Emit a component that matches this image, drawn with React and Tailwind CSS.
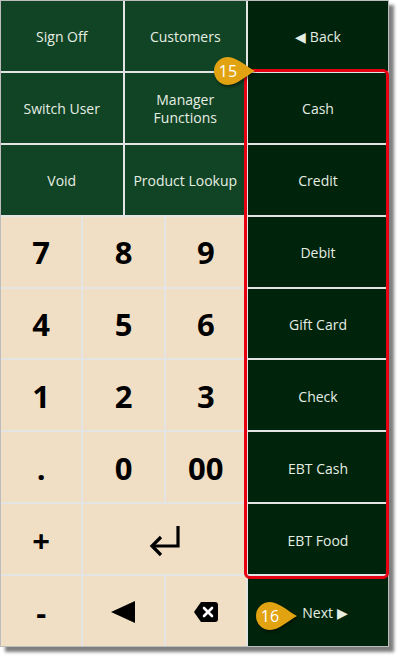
import React from "react";

const font = { fontFamily: '"Open Sans", "Liberation Sans", sans-serif' };

function Badge({ label, className }) {
  return (
    <div className={`absolute w-[46px] h-[32px] ${className}`}>
      <svg width="46" height="32" viewBox="0 0 46 32" className="absolute left-0 top-0 drop-shadow-[1px_2px_1.5px_rgba(0,0,0,0.45)]">
        <path d="M15 2 A14 14 0 1 0 15 30 C24 30 34 20 42 16 C34 12 24 2 15 2 Z" fill="#e1a312" />
      </svg>
      <span className="absolute left-0 top-0 w-[30px] h-[32px] flex items-center justify-center text-white text-[16px]">
        {label}
      </span>
    </div>
  );
}

function TopBtn({ children }) {
  return (
    <div className="col-span-3 bg-[#114425] text-[#e6eee4] text-[14px] leading-[18px] pt-[2px] flex items-center justify-center text-center">
      {children}
    </div>
  );
}

function Key({ children, span = "col-span-2" }) {
  return (
    <div className={`${span} bg-[#f0dfc5] text-black font-bold text-[31px] pt-[2px] flex items-center justify-center`}>
      {children}
    </div>
  );
}

function PayBtn({ children }) {
  return (
    <div className="flex-1 bg-[#00230b] text-[#e6eee4] text-[14px] pt-[2px] flex items-center justify-center">
      {children}
    </div>
  );
}

export default function App() {
  const payments = ["Cash", "Credit", "Debit", "Gift Card", "Check", "EBT Cash", "EBT Food"];
  return (
    <div className="w-[400px] h-[658px] bg-white relative" style={font}>
      <div className="w-[389px] h-[647px] border border-[#bdbdbd] bg-[#e4e4e4] flex gap-[2px] shadow-[5px_5px_3px_rgba(0,0,0,0.5)]">
        <div className="w-[245px] grid grid-cols-6 grid-rows-9 gap-[2px]">
          <TopBtn>Sign Off</TopBtn>
          <TopBtn>Customers</TopBtn>
          <TopBtn>Switch User</TopBtn>
          <TopBtn>
            Manager
            <br />
            Functions
          </TopBtn>
          <TopBtn>Void</TopBtn>
          <TopBtn>Product Lookup</TopBtn>
          <Key>7</Key>
          <Key>8</Key>
          <Key>9</Key>
          <Key>4</Key>
          <Key>5</Key>
          <Key>6</Key>
          <Key>1</Key>
          <Key>2</Key>
          <Key>3</Key>
          <Key>.</Key>
          <Key>0</Key>
          <Key>00</Key>
          <Key>+</Key>
          <Key span="col-span-4">
            <svg width="36" height="34" viewBox="0 0 36 34">
              <path d="M31 3 V23 H6" fill="none" stroke="#000" strokeWidth="3.2" />
              <path d="M14 14 L5 23 L14 32" fill="none" stroke="#000" strokeWidth="3.2" />
            </svg>
          </Key>
          <Key>-</Key>
          <Key>
            <svg width="26" height="24" viewBox="0 0 26 24">
              <path d="M1 12 L25 1 V23 Z" fill="#000" />
            </svg>
          </Key>
          <Key>
            <svg width="26" height="22" viewBox="0 0 26 22">
              <path d="M8 1 H22 A3 3 0 0 1 25 4 V18 A3 3 0 0 1 22 21 H8 L1 11 Z" fill="#000" />
              <path d="M11 7 L19 15 M19 7 L11 15" stroke="#fff" strokeWidth="2.6" strokeLinecap="round" />
            </svg>
          </Key>
        </div>
        <div className="flex-1 flex flex-col gap-[2px]">
          <PayBtn>◀ Back</PayBtn>
          {payments.map((p) => (
            <PayBtn key={p}>{p}</PayBtn>
          ))}
          <PayBtn>
            <span className="ml-[14px]">Next ▶</span>
          </PayBtn>
        </div>
      </div>
      <div className="absolute left-[244px] top-[69px] w-[145px] h-[510px] border-[3px] border-[#e60012] rounded-[6px]" />
      <Badge label="15" className="left-[213px] top-[55px]" />
      <Badge label="16" className="left-[255px] top-[600px]" />
    </div>
  );
}
